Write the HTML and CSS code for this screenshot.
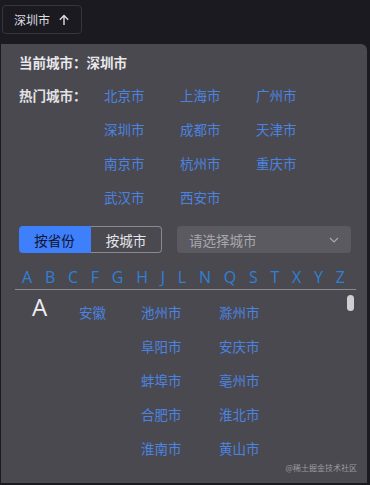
FILE: index.html
```html
<!DOCTYPE html>
<html lang="zh-CN">
<head>
  <meta charset="UTF-8">
  <meta name="viewport" content="width=device-width, initial-scale=1.0">
  <title>城市选择</title>
  <link rel="stylesheet" href="styles.css">
</head>
<body>
  <div class="top">
    <button class="trigger">
      深圳市
      <svg class="trigger-arrow" width="12" height="12" viewBox="0 0 12 12">
        <path d="M6 11V1.5M1.8 5.7L6 1.5l4.2 4.2" fill="none" stroke="#ddd" stroke-width="1.4"/>
      </svg>
    </button>
  </div>

  <div class="panel">
    <div class="current">当前城市：深圳市</div>

    <div class="hot">
      <div class="hot-label">热门城市：</div>
      <div class="hot-list">
        <a>北京市</a><a>上海市</a><a>广州市</a>
        <a>深圳市</a><a>成都市</a><a>天津市</a>
        <a>南京市</a><a>杭州市</a><a>重庆市</a>
        <a>武汉市</a><a>西安市</a>
      </div>
    </div>

    <div class="filters">
      <div class="tabs">
        <span class="tab active">按省份</span>
        <span class="tab">按城市</span>
      </div>
      <div class="select">
        <span>请选择城市</span>
        <svg width="10" height="6" viewBox="0 0 10 6">
          <path d="M1 1l4 4 4-4" fill="none" stroke="#a9a9ad" stroke-width="1.1"/>
        </svg>
      </div>
    </div>

    <div class="letters">
      <span>A</span><span>B</span><span>C</span><span>F</span><span>G</span>
      <span>H</span><span>J</span><span>L</span><span>N</span><span>Q</span>
      <span>S</span><span>T</span><span>X</span><span>Y</span><span>Z</span>
    </div>

    <div class="list">
      <div class="group">
        <div class="group-letter">A</div>
        <div class="province">安徽</div>
        <div class="cities">
          <a>池州市</a><a>滁州市</a>
          <a>阜阳市</a><a>安庆市</a>
          <a>蚌埠市</a><a>亳州市</a>
          <a>合肥市</a><a>淮北市</a>
          <a>淮南市</a><a>黄山市</a>
        </div>
      </div>
      <div class="scroll-thumb"></div>
    </div>

    <div class="watermark">@稀土掘金技术社区</div>
  </div>
</body>
</html>
```

FILE: styles.css
```css
body {
  margin: 0;
  background: #1b1a20;
  font-family: "Noto Sans CJK SC", "Noto Sans", sans-serif;
  color: #e4e4e6;
  overflow: hidden;
}

.top {
  height: 44px;
  padding: 5px 0 0 2px;
  box-sizing: border-box;
}

.trigger {
  display: flex;
  align-items: center;
  gap: 8px;
  width: 80px;
  height: 29px;
  padding: 0 0 0 11px;
  background: transparent;
  border: 1px solid #36353c;
  border-radius: 4px;
  color: #dedee0;
  font-family: inherit;
  font-size: 12px;
}

.trigger-arrow {
  margin-top: 1px;
}

/* panneau */
.panel {
  position: relative;
  margin-left: 1px;
  width: 366px;
  height: 439px;
  background: #4a4950;
  border-radius: 0 6px 0 0;
  padding: 8px 0 0 18px;
  box-sizing: border-box;
  overflow: hidden;
}

.panel::before {
  content: "";
  position: absolute;
  top: -6px;
  left: 7px;
  border: 6px solid transparent;
  border-top: 0;
  border-bottom-color: #4a4950;
}

.current {
  font-size: 13.5px;
  font-weight: 700;
  line-height: 20px;
  color: #e8e8ea;
}

.hot {
  display: flex;
  margin-top: 6px;
}

.hot-label {
  width: 85px;
  flex-shrink: 0;
  font-size: 13.5px;
  font-weight: 700;
  line-height: 34px;
  color: #e2e2e4;
}

.hot-list {
  display: grid;
  grid-template-columns: repeat(3, 76px);
  grid-auto-rows: 34px;
}

a {
  color: #4a84e0;
  font-size: 13.5px;
  line-height: 34px;
}

.filters {
  display: flex;
  gap: 15px;
  margin-top: 12px;
}

.tabs {
  display: flex;
  height: 27px;
}

.tab {
  width: 71px;
  display: flex;
  align-items: center;
  justify-content: center;
  font-size: 13.5px;
  color: #e6e6e8;
  border: 1px solid #8a898f;
  border-left: 0;
  border-radius: 0 4px 4px 0;
  box-sizing: border-box;
}

.tab.active {
  width: 72px;
  background: #3e7ffc;
  border-color: #3e7ffc;
  color: #13132a;
  border-radius: 4px 0 0 4px;
}

.select {
  width: 174px;
  height: 27px;
  background: #5b5a60;
  border-radius: 4px;
  display: flex;
  align-items: center;
  justify-content: space-between;
  padding: 0 12px 0 12px;
  box-sizing: border-box;
  font-size: 13.5px;
  color: #a8a7ad;
}

.letters {
  display: flex;
  justify-content: space-between;
  margin: 13px 0 0 -4px;
  width: 341px;
  padding: 0 11px 1px 7px;
  box-sizing: border-box;
  border-bottom: 1px solid #8b8a90;
  font-family: "Open Sans", sans-serif;
  font-size: 16px;
  line-height: 22px;
  color: #2f80d8;
}

.list {
  position: relative;
  margin-top: 5px;
}

.group {
  display: flex;
}

.group-letter {
  width: 47px;
  padding-left: 13px;
  font-family: "Open Sans", sans-serif;
  font-size: 24px;
  line-height: 24px;
  color: #eeeef0;
}

.province {
  width: 62px;
  color: #4a84e0;
  font-size: 13.5px;
  line-height: 34px;
}

.cities {
  display: grid;
  grid-template-columns: repeat(2, 78px);
  grid-auto-rows: 34px;
}

.scroll-thumb {
  position: absolute;
  top: 0;
  left: 328px;
  width: 7px;
  height: 16px;
  background: #cfcfd2;
  border-radius: 4px;
}

.watermark {
  position: absolute;
  right: 10px;
  bottom: 10px;
  font-size: 8px;
  color: #9d9ca2;
}
```
